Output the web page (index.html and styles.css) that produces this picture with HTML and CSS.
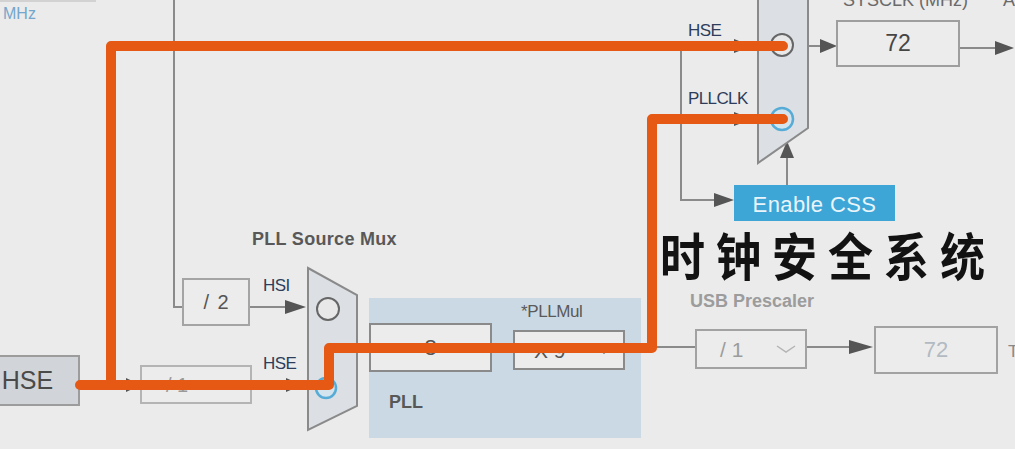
FILE: index.html
```html
<!DOCTYPE html>
<html lang="zh">
<head>
<meta charset="utf-8">
<title>Clock Configuration</title>
<link rel="stylesheet" href="styles.css">
</head>
<body>
<div class="canvas">
  <svg class="wires" width="1015" height="449" viewBox="0 0 1015 449">
    <g class="wire">
      <line x1="0" y1="1" x2="96" y2="1" class="faint"/>
      <polyline points="174,0 174,307 182,307"/>
      <line x1="250" y1="307" x2="290" y2="307"/>
      <line x1="80" y1="385" x2="130" y2="385"/>
      <line x1="252" y1="385" x2="290" y2="385"/>
      <line x1="111" y1="46" x2="740" y2="46"/>
      <polyline points="681,46 681,200 718,200"/>
      <line x1="652" y1="119" x2="740" y2="119"/>
      <line x1="808" y1="46" x2="822" y2="46"/>
      <line x1="960" y1="48" x2="1000" y2="48"/>
      <line x1="787" y1="185" x2="787" y2="155"/>
      <line x1="641" y1="347" x2="695" y2="347"/>
      <line x1="807" y1="347" x2="855" y2="347"/>
    </g>
    <g class="head">
      <polygon points="285,300 306,307 285,314"/>
      <polygon points="126,378 141,385 126,392"/>
      <polygon points="286,378 302,385 286,392"/>
      <polygon points="734,39 752,46 734,53"/>
      <polygon points="714,193 734,200 714,207"/>
      <polygon points="734,112 752,119 734,126"/>
      <polygon points="820,39 837,46 820,53"/>
      <polygon points="995,41 1014,48 995,55"/>
      <polygon points="780,158 787,141 794,158"/>
      <polygon points="849,340 873,347 849,354"/>
    </g>
    <g class="mux">
      <polygon points="758,-4 808,-4 808,128 758,163"/>
      <polygon points="308,268 357,295 357,406 308,430"/>
    </g>
    <circle class="port" cx="782" cy="45" r="11"/>
    <circle class="port on" cx="782" cy="119" r="11"/>
    <circle class="port" cx="328" cy="309" r="11"/>
    <circle class="port on" cx="326" cy="388" r="10"/>
  </svg>

  <div class="lbl mhz">MHz</div>
  <div class="lbl head-lbl sysclk-lbl">SYSCLK (MHz)</div>
  <div class="lbl head-lbl a-lbl">A</div>
  <div class="lbl sig hse-top">HSE</div>
  <div class="lbl sig pllclk">PLLCLK</div>
  <div class="box sysclk">72</div>
  <div class="css-btn">Enable CSS</div>

  <div class="lbl title pllsrc">PLL Source Mux</div>
  <div class="box div2">/ 2</div>
  <div class="lbl sig hsi">HSI</div>
  <div class="lbl sig hse-low">HSE</div>
  <div class="box hse-src">HSE</div>
  <div class="box sel div1"><span>/ 1</span><svg class="chev" width="18" height="8" viewBox="0 0 18 8"><polyline points="1,1 9,7 17,1"/></svg></div>

  <div class="pll-panel"></div>
  <div class="lbl mul-lbl">*PLLMul</div>
  <div class="box pll-in">8</div>
  <div class="box sel pllmul"><span>X 9</span><svg class="chev" width="18" height="8" viewBox="0 0 18 8"><polyline points="1,1 9,7 17,1"/></svg></div>
  <div class="lbl title pll-lbl">PLL</div>

  <div class="lbl title usb-lbl">USB Prescaler</div>
  <div class="box sel usb-div"><span>/ 1</span><svg class="chev" width="20" height="8" viewBox="0 0 20 8"><polyline points="1,1 10,7 19,1"/></svg></div>
  <div class="box usb-out">72</div>
  <div class="lbl head-lbl t-lbl">T</div>

  <svg class="overlay" width="1015" height="449" viewBox="0 0 1015 449">
    <path d="M783,46 H111 V385"/>
    <path d="M80,385 H329 V348 H652 V119 H783"/>
  </svg>

  <div class="caption">时钟安全系统</div>
</div>
</body>
</html>
```

FILE: styles.css
```css
html, body {
  margin: 0;
  padding: 0;
  background: #ebebeb;
}

.canvas {
  position: relative;
  width: 1015px;
  height: 449px;
  overflow: hidden;
  background: #ebebeb;
  font-family: "Liberation Sans", Arial, sans-serif;
}

.wires, .overlay {
  position: absolute;
  left: 0;
  top: 0;
}

.wire line, .wire polyline {
  stroke: #8a8a8a;
  stroke-width: 2;
  fill: none;
}

.wire .faint {
  stroke: #d2d2d2;
}

.head polygon {
  fill: #555555;
}

.mux polygon {
  fill: #dce0e5;
  stroke: #8a8a8a;
  stroke-width: 2;
}

.port {
  fill: #e8e8e8;
  stroke: #666666;
  stroke-width: 2;
}

.port.on {
  fill: #d3e4ee;
  stroke: #56acd6;
  stroke-width: 2.5;
}

.overlay {
  pointer-events: none;
}

.overlay path {
  fill: none;
  stroke: #e65914;
  stroke-width: 10;
  stroke-linecap: round;
  stroke-linejoin: round;
}

/* labels */
.lbl {
  position: absolute;
  white-space: nowrap;
  line-height: 1;
}

.mhz {
  left: 3px;
  top: 6px;
  font-size: 16px;
  color: #74a7cb;
}

.head-lbl {
  font-size: 18px;
  color: #6a6a6a;
  top: -9px;
}

.sysclk-lbl { left: 843px; }
.a-lbl { left: 1003px; }
.t-lbl { left: 1008px; top: 343px; font-size: 17px; color: #888; }

.sig {
  font-size: 17px;
  letter-spacing: -0.6px;
  color: #2d3d5b;
}

.hse-top { left: 688px; top: 22px; }
.pllclk { left: 688px; top: 90px; }
.hsi { left: 263px; top: 277px; }
.hse-low { left: 263px; top: 355px; }

.title {
  font-size: 18px;
  font-weight: bold;
  color: #585858;
}

.pllsrc { left: 252px; top: 230px; letter-spacing: 0.3px; }
.pll-lbl { left: 389px; top: 393px; }
.usb-lbl { left: 690px; top: 292px; color: #9c9c9c; }

.mul-lbl {
  left: 521px;
  top: 303px;
  font-size: 17px;
  letter-spacing: -0.4px;
  color: #5a5a5a;
}

/* boxes */
.box {
  position: absolute;
  box-sizing: border-box;
  display: flex;
  align-items: center;
  justify-content: center;
  border: 2px solid #9e9e9e;
  background: #ececec;
  color: #4a4a4a;
  line-height: 1;
}

.sel {
  justify-content: space-between;
}

.chev polyline {
  fill: none;
  stroke: #9a9a9a;
  stroke-width: 1.5;
}

.sysclk {
  left: 836px;
  top: 20px;
  width: 124px;
  height: 47px;
  font-size: 23px;
  color: #454545;
}

.css-btn {
  position: absolute;
  left: 734px;
  top: 185px;
  width: 161px;
  height: 36px;
  display: flex;
  align-items: center;
  justify-content: center;
  padding-top: 3px;
  box-sizing: border-box;
  background: #3ea6d6;
  color: #e9f5fb;
  font-size: 22px;
  letter-spacing: 0.4px;
}

.hse-src {
  left: -25px;
  top: 355px;
  width: 105px;
  height: 51px;
  background: #d1d4d8;
  border-color: #9c9c9c;
  font-size: 25px;
  color: #4a4a4a;
}

.div2 {
  left: 182px;
  top: 278px;
  width: 68px;
  height: 48px;
  border-color: #a4a4a4;
  font-size: 20px;
  word-spacing: 3px;
  color: #555555;
}

.div1 {
  left: 140px;
  top: 365px;
  width: 112px;
  height: 39px;
  padding: 0 10px 0 24px;
  border-color: #b4b4b4;
  font-size: 20px;
  color: #9a9a9a;
}

.pll-panel {
  position: absolute;
  left: 369px;
  top: 298px;
  width: 272px;
  height: 140px;
  background: #cbd9e4;
}

.pll-in {
  left: 369px;
  top: 323px;
  width: 123px;
  height: 49px;
  border-color: #8a8a8a;
  font-size: 22px;
  color: #555555;
}

.pllmul {
  left: 513px;
  top: 330px;
  width: 112px;
  height: 40px;
  padding: 0 10px 0 19px;
  border-color: #8a8a8a;
  font-size: 21px;
  color: #555555;
}

.pllmul .chev polyline {
  stroke: #666666;
}

.usb-div {
  left: 695px;
  top: 329px;
  width: 112px;
  height: 40px;
  padding: 0 9px 0 23px;
  border-color: #a2a2a2;
  font-size: 21px;
  color: #9c9c9c;
}

.usb-div .chev polyline {
  stroke: #b4b4b4;
}

.usb-out {
  left: 874px;
  top: 326px;
  width: 124px;
  height: 48px;
  border-color: #a2a2a2;
  font-size: 22px;
  color: #b2bac2;
}

.caption {
  position: absolute;
  left: 660px;
  top: 228px;
  font-family: "Noto Sans CJK SC", "Noto Sans CJK JP", sans-serif;
  font-weight: bold;
  font-size: 45px;
  line-height: 1;
  letter-spacing: 11px;
  color: #121212;
  white-space: nowrap;
  transform: scaleY(1.14);
  transform-origin: left top;
}
```
